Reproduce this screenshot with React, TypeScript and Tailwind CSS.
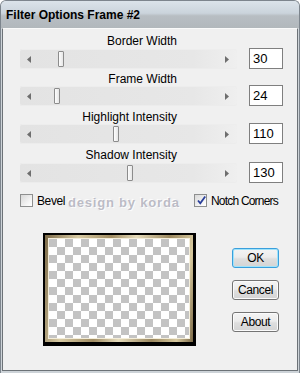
import React from "react";

const font = { fontFamily: '"Liberation Sans", Arial, sans-serif' };

function Slider({ label, value, thumb, labelMt, sliderMt }: { label: string; value: string; thumb: number; labelMt: string; sliderMt: string }) {
  return (
    <div className="flex flex-col">
      <div className={`w-[174px] h-[12px] leading-[12px] text-right text-[12px] text-black ${labelMt}`}>{label}</div>
      <div className={`flex items-center h-[21px] ${sliderMt}`}>
        <div className="relative ml-[17px] w-[217px] h-[20px] rounded-[2px] bg-[linear-gradient(to_right,#e3e3e3,#e7e7e7_80%,#efefef)] shadow-[inset_0_1px_0_#ededed,inset_0_-1px_0_#ececec]">
          <svg className="absolute left-[7px] top-[7px]" width="4" height="7" viewBox="0 0 4 7">
            <path d="M4 0 L0 3.5 L4 7 Z" fill="#6e6e6e" />
          </svg>
          <svg className="absolute right-[8px] top-[7px]" width="4" height="7" viewBox="0 0 4 7">
            <path d="M0 0 L4 3.5 L0 7 Z" fill="#6e6e6e" />
          </svg>
          <div
            className="absolute top-[2px] w-[6px] h-[16px] rounded-[1px] border border-[#8c8c8c] bg-[linear-gradient(to_right,#fdfdfd,#e6e6e6)]"
            style={{ left: thumb }}
          />
        </div>
        <div className="ml-[12px] w-[34px] h-[21px] border border-[#7f7f7f] bg-white pl-[3px] pt-[2px] text-[13px] leading-[15px] text-black">
          {value}
        </div>
      </div>
    </div>
  );
}

function Checkbox({ checked }: { checked?: boolean }) {
  return (
    <div className="relative w-[13px] h-[13px] border border-[#8e8f8f] bg-[linear-gradient(135deg,#d8d8d8,#f6f6f6_70%,#ffffff)]">
      {checked && (
        <svg className="absolute left-[1px] top-[0px]" width="11" height="11" viewBox="0 0 11 11">
          <path d="M2 5.5 L4.3 8.3 L9.2 1.5" stroke="#2a3f9a" strokeWidth="1.8" fill="none" />
        </svg>
      )}
    </div>
  );
}

function Button({ children, primary }: { children: React.ReactNode; primary?: boolean }) {
  return (
    <div
      className={`w-[47px] h-[20px] rounded-[3px] border flex items-center justify-center text-[12px] tracking-[-0.4px] text-black bg-[linear-gradient(to_bottom,#f4f4f4,#ececec_45%,#dedede_55%,#d4d4d4)] ${
        primary ? "border-[#3a9fdc] shadow-[inset_0_0_0_1px_#9fe3fb]" : "border-[#747474] shadow-[inset_0_0_0_1px_#fbfbfb]"
      }`}
    >
      {children}
    </div>
  );
}

export default function App() {
  return (
    <div style={font} className="w-[300px] h-[373px] flex flex-col rounded-t-[6px] overflow-hidden bg-[#cdd3d8] border-t border-x border-[#7d858d]">
      <div className="h-[27px] shrink-0 flex items-center pl-[5px] pt-[1px] bg-[linear-gradient(to_bottom,#dbe3ea,#cbd4dc_45%,#b8bec3_55%,#b2b8bc)]">
        <span className="text-[12px] font-bold text-black">Filter Options Frame #2</span>
      </div>
      <div className="flex-1 flex px-[1px] pb-[2px]">
        <div className="flex-1 flex flex-col bg-[#f0f0f0] border-l border-r border-b border-[#6c7277] border-t border-t-[#fafafa]">
          <Slider label="Border Width" value="30" thumb={38} labelMt="mt-[6px]" sliderMt="mt-[1px]" />
          <Slider label="Frame Width" value="24" thumb={34} labelMt="mt-[4px]" sliderMt="mt-[0px]" />
          <Slider label="Highlight Intensity" value="110" thumb={93} labelMt="mt-[5px]" sliderMt="mt-[0px]" />
          <Slider label="Shadow Intensity" value="130" thumb={107} labelMt="mt-[5px]" sliderMt="mt-[1px]" />

          <div className="flex items-center mt-[11px] h-[13px]">
            <div className="ml-[17px] w-[48px] flex items-center">
              <Checkbox />
              <span className="ml-[4px] text-[12px] tracking-[-0.4px] text-black">Bevel</span>
            </div>
            <div
              className="w-[126px] text-[13px] font-bold tracking-[0.8px] text-[#bcbcc6] pt-[4px] [text-shadow:1px_1px_1px_#ffffff,-1px_-1px_1px_#ffffff,0_0_2px_#d0d0d8]"
            >
              design by korda
            </div>
            <div className="flex items-center">
              <Checkbox checked />
              <span className="ml-[4px] text-[12px] tracking-[-0.8px] text-black">Notch Corners</span>
            </div>
          </div>

          <div className="flex mt-[26px]">
            <div className="ml-[40px] w-[153px] h-[113px] border-t-2 border-l-2 border-r-[3px] border-b-4 border-black bg-[linear-gradient(100deg,#7c6a48,#d8cba4_20%,#a08c62_40%,#e6dcbc_55%,#9a875e_75%,#d6c89e_90%,#7c6a48)] p-[3px]">
              <div className="w-full h-full border border-[#f4eedb] bg-[conic-gradient(#ffffff_25%,#c3c3c3_0_50%,#ffffff_0_75%,#c3c3c3_0)] bg-[length:16px_16px]" />
            </div>
            <div className="ml-[36px] mt-[15px] flex flex-col gap-[12px]">
              <Button primary>OK</Button>
              <Button>Cancel</Button>
              <Button>About</Button>
            </div>
          </div>
        </div>
      </div>
    </div>
  );
}
